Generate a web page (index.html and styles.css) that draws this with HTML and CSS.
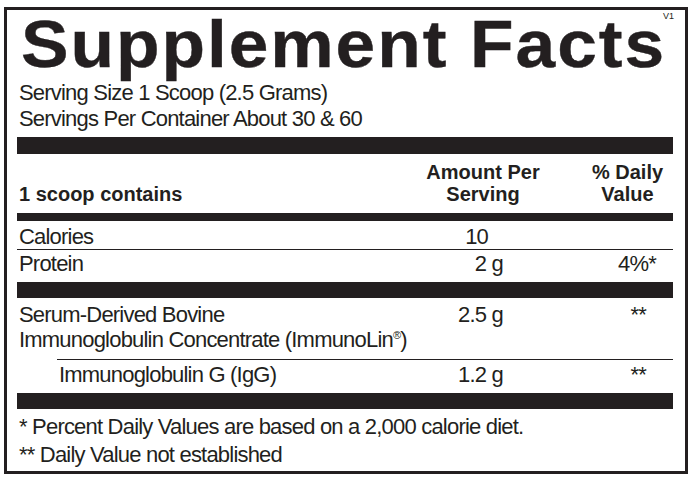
FILE: index.html
```html
<!DOCTYPE html>
<html lang="en">
<head>
<meta charset="utf-8">
<title>Supplement Facts</title>
<link rel="stylesheet" href="styles.css">
</head>
<body>
<div class="label">
  <span class="ver">V1</span>
  <h1 class="title"><span class="title-text">Supplement Facts</span></h1>
  <div class="serving">
    <div>Serving Size 1 Scoop (2.5 Grams)</div>
    <div>Servings Per Container About 30 &amp; 60</div>
  </div>
  <div class="bar bar-thick"></div>
  <div class="row head">
    <div class="name">1 scoop contains</div>
    <div class="amt">Amount Per<br>Serving</div>
    <div class="dv">% Daily<br>Value</div>
  </div>
  <div class="bar bar-med"></div>
  <div class="row first">
    <div class="name">Calories</div>
    <div class="amt num-only">10</div>
    <div class="dv"></div>
  </div>
  <div class="rule"></div>
  <div class="row second">
    <div class="name">Protein</div>
    <div class="amt">2 g</div>
    <div class="dv">4%*</div>
  </div>
  <div class="bar bar-16"></div>
  <div class="row multi">
    <div class="name">Serum-Derived Bovine<br>Immunoglobulin Concentrate (ImmunoLin<span class="reg">®</span>)</div>
    <div class="amt">2.5 g</div>
    <div class="dv stars">**</div>
  </div>
  <div class="rule indent"></div>
  <div class="row sub">
    <div class="name">Immunoglobulin G (IgG)</div>
    <div class="amt">1.2 g</div>
    <div class="dv stars">**</div>
  </div>
  <div class="bar bar-16"></div>
  <div class="foot">
    <div>* Percent Daily Values are based on a 2,000 calorie diet.</div>
    <div>** Daily Value not established</div>
  </div>
</div>
</body>
</html>
```
FILE: styles.css
```css
* {
  box-sizing: border-box;
  margin: 0;
  padding: 0;
}

body {
  margin: 0;
  background: #ffffff;
  color: #231f20;
  font-family: "Liberation Sans", Arial, sans-serif;
  font-size: 22px;
  letter-spacing: -0.8px;
}

.label {
  position: relative;
  margin: 7px 0 0 4px;
  width: 684px;
  height: 467px;
  border: 3px solid #231f20;
  padding: 4px 12px 0 10px;
}

.ver {
  position: absolute;
  top: 2px;
  right: 11px;
  font-size: 9px;
  line-height: 9px;
  letter-spacing: 0;
}

.title {
  font-weight: 700;
  font-size: 66px;
  line-height: 60px;
  height: 60px;
  padding-left: 4px;
  white-space: nowrap;
}

.title-text {
  display: inline-block;
  letter-spacing: 1.8px;
  transform: scaleX(1.08);
  transform-origin: left center;
  -webkit-text-stroke: 0.4px #231f20;
}

.serving {
  margin-top: 6px;
  line-height: 26px;
  padding-left: 2px;
}

.bar {
  background: #231f20;
}

.bar-thick {
  height: 17px;
  margin-top: 5px;
}

.bar-med {
  height: 8px;
  margin-top: 8px;
}

.bar-16 {
  height: 16px;
  margin-top: 5px;
}

.rule {
  height: 1px;
  background: #231f20;
}

.rule.indent {
  margin-left: 40px;
}

.row {
  display: grid;
  grid-template-columns: 391px 150px 115px;
  line-height: 26px;
  white-space: nowrap;
}

.row .name {
  padding-left: 2px;
}

.row .amt {
  text-align: right;
  padding-right: 55px;
}

.row .amt.num-only {
  padding-right: 70px;
}

.row .dv {
  text-align: right;
  padding-right: 17px;
}

.row .dv.stars {
  padding-right: 27px;
}

.row.head {
  margin-top: 7px;
  font-weight: 700;
  font-size: 20px;
  line-height: 22px;
  letter-spacing: 0;
}

.row.head .name {
  align-self: end;
}

.row.head .amt {
  text-align: center;
  padding-right: 0;
}

.row.head .dv {
  text-align: center;
  padding-right: 0;
  padding-left: 24px;
}

.row.first {
  padding-top: 3px;
  line-height: 25px;
}

.row.second {
  padding-top: 1px;
}

.row.multi {
  margin-top: 4px;
  line-height: 25px;
  padding-bottom: 7px;
}

.row.sub {
  padding-top: 2px;
}

.row.sub .name {
  padding-left: 42px;
}

.reg {
  font-size: 11px;
  vertical-align: 8px;
  line-height: 0;
}

.foot {
  margin-top: 4px;
  line-height: 28px;
  padding-left: 2px;
}
```
